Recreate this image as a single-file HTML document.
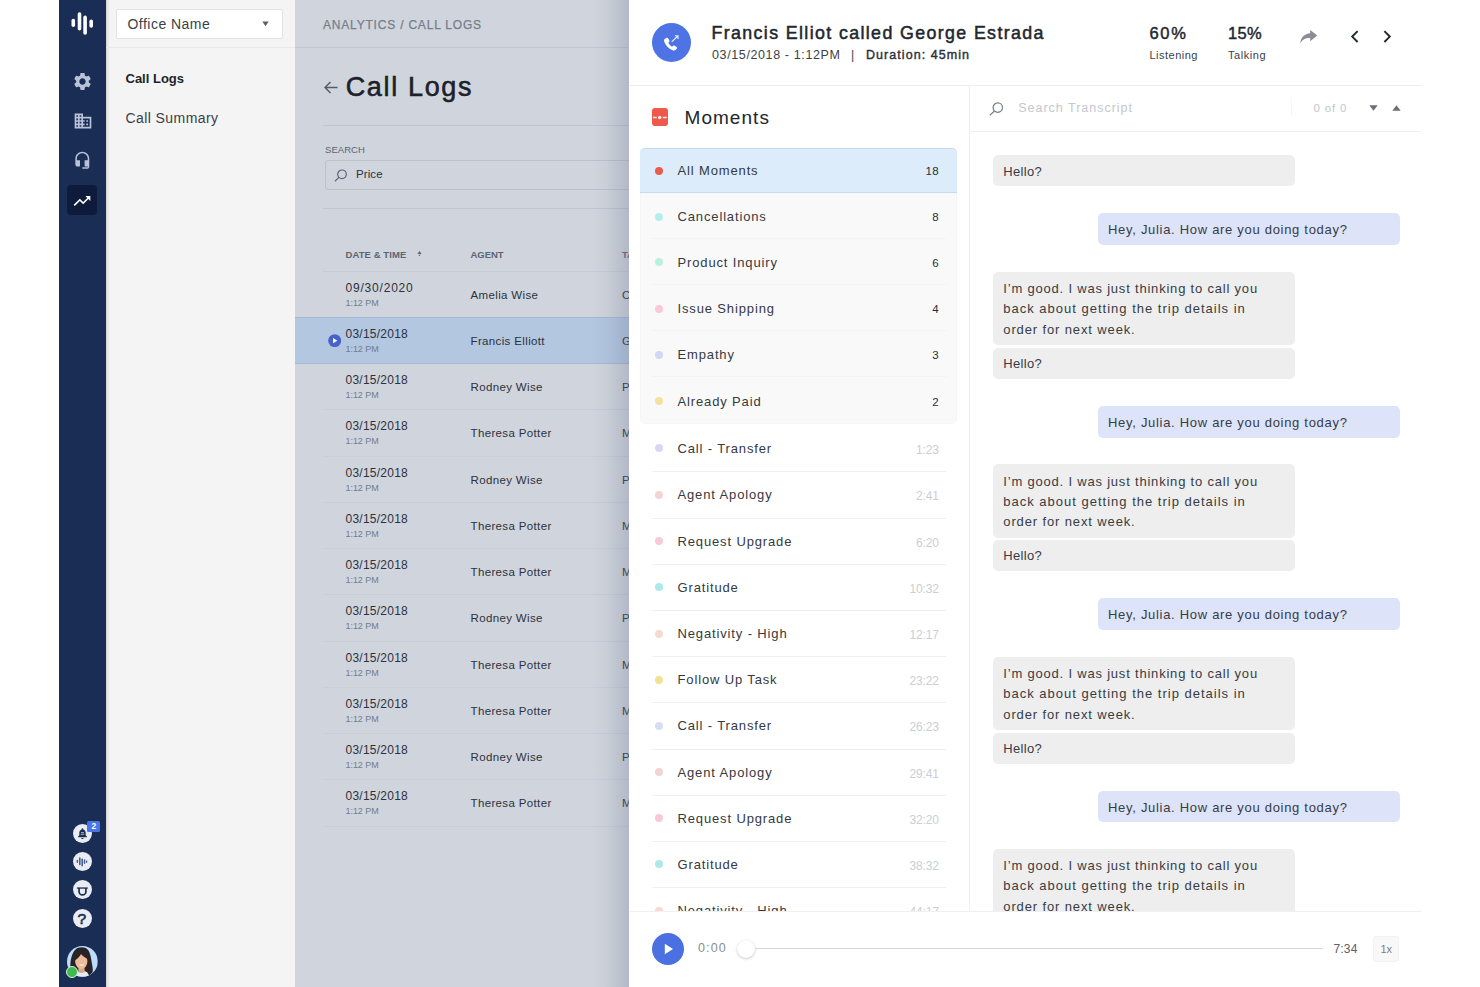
<!DOCTYPE html>
<html lang="en">
<head>
<meta charset="utf-8">
<title>Call Logs</title>
<style>
*{box-sizing:border-box;margin:0;padding:0}
html,body{width:1480px;height:987px;overflow:hidden;background:#fff}
body{font-family:"Liberation Sans",sans-serif;color:#1f232b;position:relative}
.abs{position:absolute}
.t{position:absolute;white-space:nowrap;line-height:1}
/* ---------- sidebar ---------- */
#side{left:59px;top:0;width:47px;height:987px;background:#1a2d54}
#side svg{position:absolute}
.cbtn{position:absolute;left:13.5px;width:19px;height:19px;border-radius:50%;background:#e9ecf3}
/* ---------- subnav ---------- */
#sub{left:106px;top:0;width:189px;height:987px;background:#f4f4f4;box-shadow:inset 3px 0 3px -2px rgba(0,0,0,.18)}
#office{left:10px;top:9px;width:167px;height:29.6px;background:#fff;border:1px solid #e3e3e3;border-radius:2px}
/* ---------- main (dimmed) ---------- */
#main{left:295px;top:0;width:334px;height:987px;background:#d0d5dd;overflow:hidden}
.hr{position:absolute;height:1px;background:#c0c5d0}
.row{position:absolute;left:0;width:334px;height:46.25px}
.row .d{left:50.5px;top:10.6px;font-size:12px;letter-spacing:.24px;color:#2c313c}
.row .h{left:50.5px;top:27.6px;font-size:9px;letter-spacing:-.05px;color:#747b89}
.row .a{left:175.5px;top:19.4px;font-size:11.5px;letter-spacing:.36px;color:#2c313c}
.row .x{left:327px;top:19.4px;font-size:11.5px;color:#2c313c}
.row.sel{background:#b3c7e1;box-shadow:inset 0 1px 0 #a4b8d4,inset 0 -1px 0 #a4b8d4}
.row .ln{position:absolute;left:28px;right:0;top:0;height:1px;background:#c8cdd7}
/* ---------- panel ---------- */
#panel{left:629px;top:0;width:792px;height:987px;background:#fff}
.dot{position:absolute;left:26.2px;width:8px;height:8px;border-radius:50%}
.ml{left:48.5px;font-size:13px;letter-spacing:.86px;color:#353941}
.mc{right:30.2px;font-size:11.5px;letter-spacing:.2px;color:#2a2e36}
.mt{right:30.2px;font-size:12px;letter-spacing:-.15px;color:#cbced3}
.sep{position:absolute;left:22.5px;width:294px;height:1px;background:#f0f0f0}
.sep.sg{background:#f3f3f3}
.bub{position:absolute;width:302px;border-radius:5px;font-size:13px;letter-spacing:.74px;color:#33373f}
.ct{font-size:13px;color:#383c44}
.bub.g{left:23.300px;background:#eeeeee}
.bub.b{left:128px;background:#dde3f8}
</style>
</head>
<body>

<!-- ================= SIDEBAR ================= -->
<div id="side" class="abs">
  <!-- logo -->
  <svg style="left:12px;top:12px" width="23" height="23" viewBox="0 0 23 23">
    <g fill="#fff">
      <rect x="0.5" y="6.8" width="3.6" height="8.2" rx="1.8"/>
      <rect x="6.7" y="0.2" width="3.6" height="18.4" rx="1.8"/>
      <rect x="12.3" y="3.6" width="3.6" height="19.2" rx="1.8"/>
      <rect x="18.4" y="7.4" width="3.6" height="8.4" rx="1.8"/>
    </g>
  </svg>

  <!-- gear -->
  <svg style="left:12.8px;top:70.8px" width="21" height="21" viewBox="0 0 24 24"><path fill="#b9c2d8" d="M19.14 12.94c.04-.3.06-.61.06-.94 0-.32-.02-.64-.07-.94l2.03-1.58c.18-.14.23-.41.12-.61l-1.92-3.32c-.12-.22-.37-.29-.59-.22l-2.39.96c-.5-.38-1.03-.7-1.62-.94l-.36-2.54c-.04-.24-.24-.41-.48-.41h-3.84c-.24 0-.43.17-.47.41l-.36 2.54c-.59.24-1.13.57-1.62.94l-2.39-.96c-.22-.08-.47 0-.59.22L2.74 8.87c-.12.21-.08.47.12.61l2.03 1.58c-.05.3-.09.63-.09.94s.02.64.07.94l-2.03 1.58c-.18.14-.23.41-.12.61l1.92 3.32c.12.22.37.29.59.22l2.39-.96c.5.38 1.03.7 1.62.94l.36 2.54c.05.24.24.41.48.41h3.84c.24 0 .44-.17.47-.41l.36-2.54c.59-.24 1.13-.56 1.62-.94l2.39.96c.22.08.47 0 .59-.22l1.92-3.32c.12-.22.07-.47-.12-.61l-2.01-1.58zM12 15.6c-1.98 0-3.6-1.62-3.6-3.6s1.62-3.6 3.6-3.6 3.6 1.62 3.6 3.6-1.62 3.6-3.6 3.6z"/></svg>
  <!-- building -->
  <svg style="left:13.5px;top:110.8px" width="20" height="20" viewBox="0 0 24 24"><path fill="#b9c2d8" d="M12 7V3H2v18h20V7H12zM6 19H4v-2h2v2zm0-4H4v-2h2v2zm0-4H4V9h2v2zm0-4H4V5h2v2zm4 12H8v-2h2v2zm0-4H8v-2h2v2zm0-4H8V9h2v2zm0-4H8V5h2v2zm10 12h-8v-2h2v-2h-2v-2h2v-2h-2V9h8v10zm-2-8h-2v2h2v-2zm0 4h-2v2h2v-2z"/></svg>
  <!-- headset -->
  <svg style="left:14px;top:151.2px" width="18.6" height="18.6" viewBox="0 0 24 24"><path fill="#b9c2d8" d="M12 1c-4.97 0-9 4.03-9 9v7c0 1.66 1.34 3 3 3h3v-8H5v-2c0-3.87 3.13-7 7-7s7 3.13 7 7v2h-4v8h4v1h-7v2h6c1.66 0 3-1.34 3-3V10c0-4.97-4.03-9-9-9z"/></svg>
  <!-- active analytics -->
  <div class="abs" style="left:8.3px;top:185.1px;width:29.6px;height:29.6px;border-radius:4px;background:#0e1b3a"></div>
  <svg style="left:12.9px;top:190.6px" width="20" height="20" viewBox="0 0 24 24"><path fill="#fff" d="M16 6l2.29 2.29-4.88 4.88-4-4L2 16.59 3.41 18l6-6 4 4 6.3-6.29L22 12V6z"/></svg>

  <!-- bottom round buttons -->
  <div class="cbtn" style="top:824px"></div>
  <svg style="left:17.5px;top:827.5px" width="11" height="12" viewBox="0 0 11 12"><path fill="#1a2d54" d="M5.5 0.3c.5 0 .8.4.8.8v.3c1.5.4 2.4 1.7 2.4 3.3v2.6l1.2 1.3v.6H1.100v-.6l1.200-1.300V4.700c0-1.600.9-2.900 2.400-3.300v-.3c0-.4.3-.8.8-.8zM4.300 9.900h2.400c0 .7-.5 1.200-1.200 1.200s-1.200-.5-1.200-1.200z"/><path d="M4 4.600h3M3.700 6.300h3.600" stroke="#e9ecf3" stroke-width=".7"/></svg>
  <div class="abs" style="left:28.4px;top:821.1px;width:12.7px;height:10.9px;background:#4a74e8;border-radius:1.5px"></div>
  <span class="t" style="left:32.6px;top:822.3px;font-size:8.5px;font-weight:700;color:#fff">2</span>

  <div class="cbtn" style="top:852px"></div>
  <svg style="left:17px;top:856px" width="12" height="11" viewBox="0 0 12 11"><g fill="#47608f"><rect x=".6" y="3.800" width="1.5" height="3.200" rx=".75"/><rect x="3" y="1.200" width="1.600" height="8" rx=".8"/><rect x="5.400" y="2.500" width="1.600" height="8" rx=".8"/><rect x="7.800" y="3.300" width="1.500" height="4.600" rx=".75"/><rect x="10" y="4.400" width="1.300" height="2.400" rx=".65"/></g></svg>

  <div class="cbtn" style="top:880.4px"></div>
  <svg style="left:17px;top:885.6px" width="13" height="11" viewBox="0 0 13 11"><path d="M.9 2.050H11.800" fill="none" stroke="#1a2d54" stroke-width="1.300"/><path d="M3.050 2V5.400a3.430 3.430 0 0 0 6.860 0V2" fill="none" stroke="#1a2d54" stroke-width="1.700"/></svg>

  <div class="cbtn" style="top:908.6px"></div>
  <span class="t" style="left:18.5px;top:910.6px;font-size:15.5px;color:#1a2d54;-webkit-text-stroke:.6px #1a2d54">?</span>

  <!-- avatar -->
  <svg style="left:7.900px;top:946px" width="30.800" height="30.800" viewBox="0 0 30.800 30.800">
    <defs><clipPath id="avc"><circle cx="15.400" cy="15.400" r="15.400"/></clipPath></defs>
    <g clip-path="url(#avc)">
      <rect width="30.800" height="30.800" fill="#bddcfb"/>
      <path d="M3.400 23C3 14.500 4.600 7.200 8.800 3.300 11 1.300 15.600.7 18.600 2.100c3.500 1.600 5 6.400 5.900 12.900.7 4.500 1.800 8 1.100 11.200L22 30H8z" fill="#2a2326"/>
      <path d="M8.300 31.500c.5-4.300 3-6.500 5.700-6.500h3c2.600 0 4.700 2.200 5.600 6.500z" fill="#e3ebf5"/>
      <path d="M11.500 20.500h5.800l.5 5.300c-1.900 1.600-4.700 1.600-6.600 0z" fill="#d9a688"/>
      <ellipse cx="14.300" cy="15.500" rx="6.100" ry="7.500" fill="#ebbc9b"/>
      <path d="M7.700 14.200C7.500 9 10.400 6.200 14.500 6.200c4 0 6.500 2.700 6.600 6.900-3-1.400-5.600-3.100-7.100-5.200-1.400 2.700-3.700 5-6.300 6.300z" fill="#2a2326"/>
      <path d="M12.300 17.900c1.500 1.100 3.500 1.100 5 0-.8 2-4.200 2-5 0z" fill="#fff"/>
    </g>
  </svg>
  <div class="abs" style="left:6.700px;top:966px;width:12px;height:12px;border-radius:50%;background:#3dbb52;border:1.300px solid #d6f0da"></div>
</div>

<!-- ================= SUBNAV ================= -->
<div id="sub" class="abs">
  <div class="hr" style="left:0;top:47px;width:189px;background:#e9e9e9"></div>
  <div id="office" class="abs">
    <span class="t" style="left:10.5px;top:7px;font-size:14px;letter-spacing:.47px;color:#3a3f48">Office Name</span>
    <svg class="abs" style="left:144.600px;top:11.200px" width="7" height="5.500" viewBox="0 0 7 5.500"><path d="M.3.400h6.400L3.500 5.200z" fill="#606060"/></svg>
  </div>
  <span class="t" style="left:19.5px;top:72px;font-size:13px;font-weight:700;color:#20242c">Call Logs</span>
  <span class="t" style="left:19.5px;top:111px;font-size:14px;letter-spacing:.42px;color:#3a3f48">Call Summary</span>
</div>

<!-- ================= MAIN (dimmed) ================= -->
<div id="main" class="abs">
  <span class="t" style="left:28px;top:18.5px;font-size:12px;letter-spacing:.8px;color:#767d8b;-webkit-text-stroke:.25px #767d8b">ANALYTICS / CALL LOGS</span>
  <div class="hr" style="left:0;top:47px;width:334px;background:#c2c7d2"></div>
  <svg class="abs" style="left:28.5px;top:80.5px" width="14" height="13" viewBox="0 0 14 13"><path d="M6.5 1L1 6.5 6.5 12M1.2 6.5H13.5" fill="none" stroke="#555b68" stroke-width="1.5"/></svg>
  <span class="t" style="left:50.7px;top:74.4px;font-size:27px;letter-spacing:1.66px;color:#1c2029;-webkit-text-stroke:.55px #1c2029">Call Logs</span>
  <div class="hr" style="left:28px;top:125px;width:306px"></div>
  <span class="t" style="left:30px;top:145px;font-size:9.5px;letter-spacing:.05px;color:#5d6472">SEARCH</span>
  <div class="abs" style="left:30px;top:160px;width:320px;height:29.5px;border:1px solid #bcc1cc;border-radius:3px"></div>
  <svg class="abs" style="left:39px;top:168.5px" width="14" height="13" viewBox="0 0 14 13"><circle cx="8" cy="5.3" r="4.3" fill="none" stroke="#5d6472" stroke-width="1.2"/><path d="M4.9 8.4L1 12.2" stroke="#5d6472" stroke-width="1.2" fill="none"/></svg>
  <span class="t" style="left:61px;top:168.8px;font-size:11.5px;letter-spacing:.1px;color:#2c313c">Price</span>
  <div class="hr" style="left:28px;top:208px;width:306px"></div>

  <span class="t" style="left:50.5px;top:250px;font-size:9.5px;font-weight:700;letter-spacing:.08px;color:#5d6472">DATE &amp; TIME</span>
  <svg class="abs" style="left:122px;top:251px" width="5" height="7" viewBox="0 0 5 7"><path d="M2.5 0L4.6 3H.4zM2.5 5.2L3.6 3.8H1.4z" fill="#5d6472"/></svg>
  <span class="t" style="left:175.5px;top:250px;font-size:9.5px;font-weight:700;letter-spacing:-.05px;color:#5d6472">AGENT</span>
  <span class="t" style="left:327px;top:250px;font-size:9.5px;font-weight:700;color:#5d6472">TA</span>
  <div class="hr" style="left:28px;top:271px;width:306px;background:#c6cbd6"></div>
  <div id="rows">
<div class="row" style="top:271px;height:46px"><span class="t d" style="letter-spacing:.8px">09/30/2020</span><span class="t h">1:12 PM</span><span class="t a">Amelia Wise</span><span class="t x">C</span></div>
<div class="row sel" style="top:317px;height:46.6px"><svg class="abs" style="left:32.6px;top:16.9px" width="13.4" height="13.4" viewBox="0 0 14 14"><circle cx="7" cy="7" r="6.8" fill="#4862c9"/><path d="M5.3 4.2L9.8 7 5.3 9.8z" fill="#fff"/></svg><span class="t d">03/15/2018</span><span class="t h">1:12 PM</span><span class="t a">Francis Elliott</span><span class="t x">G</span></div>
<div class="row" style="top:363px;height:46px"><span class="t d">03/15/2018</span><span class="t h">1:12 PM</span><span class="t a">Rodney Wise</span><span class="t x">P</span></div>
<div class="row" style="top:409px;height:47px"><span class="t d">03/15/2018</span><span class="t h">1:12 PM</span><span class="t a">Theresa Potter</span><span class="t x">M</span><i class="ln"></i></div>
<div class="row" style="top:456px;height:46px"><span class="t d">03/15/2018</span><span class="t h">1:12 PM</span><span class="t a">Rodney Wise</span><span class="t x">P</span><i class="ln"></i></div>
<div class="row" style="top:502px;height:46px"><span class="t d">03/15/2018</span><span class="t h">1:12 PM</span><span class="t a">Theresa Potter</span><span class="t x">M</span><i class="ln"></i></div>
<div class="row" style="top:548px;height:46px"><span class="t d">03/15/2018</span><span class="t h">1:12 PM</span><span class="t a">Theresa Potter</span><span class="t x">M</span><i class="ln"></i></div>
<div class="row" style="top:594px;height:47px"><span class="t d">03/15/2018</span><span class="t h">1:12 PM</span><span class="t a">Rodney Wise</span><span class="t x">P</span><i class="ln"></i></div>
<div class="row" style="top:641px;height:46px"><span class="t d">03/15/2018</span><span class="t h">1:12 PM</span><span class="t a">Theresa Potter</span><span class="t x">M</span><i class="ln"></i></div>
<div class="row" style="top:687px;height:46px"><span class="t d">03/15/2018</span><span class="t h">1:12 PM</span><span class="t a">Theresa Potter</span><span class="t x">M</span><i class="ln"></i></div>
<div class="row" style="top:733px;height:46px"><span class="t d">03/15/2018</span><span class="t h">1:12 PM</span><span class="t a">Rodney Wise</span><span class="t x">P</span><i class="ln"></i></div>
<div class="row" style="top:779px;height:47px"><span class="t d">03/15/2018</span><span class="t h">1:12 PM</span><span class="t a">Theresa Potter</span><span class="t x">M</span><i class="ln"></i></div>
<div class="hr" style="left:28px;top:826px;width:306px;background:#c8cdd7"></div>
</div><!--/rows-->
  <div id="shade" class="abs" style="left:296px;top:0;width:38px;height:987px;background:linear-gradient(90deg,rgba(110,118,145,0) 0%,rgba(110,118,145,.07) 40%,rgba(110,118,145,.30) 100%)"></div>
</div>

<!-- ================= PANEL ================= -->
<div id="panel" class="abs">
<svg class="abs" style="left:23px;top:22.800px" width="39" height="39" viewBox="0 0 39 39"><circle cx="19.500" cy="19.500" r="19.500" fill="#4d73e5"/><g transform="translate(-.78,.75) scale(1.045)"><path fill="#fff" d="M14.300 13.800c.5-.5 1.300-.5 1.700.1l1.300 1.900c.3.500.3 1.100-.1 1.500l-.8.900c.8 1.600 2 2.900 3.600 3.700l.9-.8c.4-.4 1-.4 1.500-.1l1.900 1.300c.6.400.6 1.200.1 1.700l-.9.900c-.7.700-1.700.9-2.600.6-4-1.400-7.100-4.500-8.500-8.500-.3-.9-.1-1.900.6-2.600z"/></g><path d="M19.700 18.800l6.100-5.800M22.800 12.800h3.200v3.200" fill="none" stroke="#eaf0fd" stroke-width="1.100"/></svg>
<span class="t" style="left:82.5px;top:24.6px;font-size:17.800px;letter-spacing:1.38px;color:#22262e;-webkit-text-stroke:.5px #22262e">Francis Elliot called George Estrada</span>
<span class="t" style="left:83px;top:49.4px;font-size:12.500px;letter-spacing:.62px;color:#3a3f48">03/15/2018 - 1:12PM</span>
<span class="t" style="left:222px;top:49px;font-size:12.500px;color:#3a3f48">|</span>
<span class="t" style="left:237px;top:49.4px;font-size:12.500px;letter-spacing:1.05px;color:#2c313a;-webkit-text-stroke:.4px #2c313a">Duration: 45min</span>
<span class="t" style="left:520.4px;top:24.8px;font-size:16.500px;letter-spacing:1.7px;color:#22262e;-webkit-text-stroke:.45px #22262e">60%</span>
<span class="t" style="left:520.4px;top:50.3px;font-size:11px;letter-spacing:.5px;color:#3a3f48">Listening</span>
<span class="t" style="left:599px;top:24.8px;font-size:16.500px;letter-spacing:.3px;color:#22262e;-webkit-text-stroke:.45px #22262e">15%</span>
<span class="t" style="left:599px;top:50.3px;font-size:11px;letter-spacing:.55px;color:#3a3f48">Talking</span>
<svg class="abs" style="left:670.5px;top:29.500px" width="17.500" height="14" viewBox="0 0 17.500 14"><path fill="#8a8d93" d="M10.200 0l7.100 5.600-7.100 5.700V8c-4.300-.3-7.500 1-9.900 5.200C.8 7.700 4.300 3.800 10.200 3.300z"/></svg>
<svg class="abs" style="left:721px;top:30.4px" width="10" height="14" viewBox="0 0 10 14"><path d="M7.600 1.200L2.200 6.600l5.400 5.400" fill="none" stroke="#22262e" stroke-width="1.900"/></svg>
<svg class="abs" style="left:752.7px;top:30.4px" width="10" height="14" viewBox="0 0 10 14"><path d="M2.400 1.200L7.800 6.600l-5.400 5.400" fill="none" stroke="#22262e" stroke-width="1.900"/></svg>
<div class="hr" style="left:0;top:85px;width:792px;background:#eeeeee"></div>
<div class="abs" style="left:22.6px;top:108.400px;width:16.900px;height:17.300px;border-radius:3px;background:#ee594c"></div>
<svg class="abs" style="left:24.2px;top:114.500px" width="14" height="5" viewBox="0 0 14 5"><path d="M0 2.500h3.700M9.800 2.500h3.900" stroke="#fff3e4" stroke-width="1.400"/><circle cx="6.700" cy="2.500" r="1.700" fill="#fff3e4"/></svg>
<span class="t" style="left:55.5px;top:107.500px;font-size:19px;letter-spacing:1.050px;color:#22262e">Moments</span>
<div class="abs" style="left:340px;top:86px;width:1px;height:825px;background:#f0f0f0"></div>
<div class="abs" style="left:0;top:86px;width:340px;height:825px;overflow:hidden">
<div class="abs" style="left:11.3px;top:62.3px;width:316.800px;height:276.200px;background:#f9f9f9;border:1px solid #f5f5f5;border-radius:6px"></div>
<div class="abs" style="left:11.3px;top:62.3px;width:316.800px;height:44.600px;background:#dcecfb;border-top:1px solid #c6dbef;border-bottom:1px solid #c6d9ee;border-radius:5px 5px 0 0"></div>
<i class="dot" style="top:80.7px;background:#e85c4d"></i>
<span class="t ml" style="top:78px">All Moments</span>
<span class="t mc" style="top:80.25px">18</span>
<i class="dot" style="top:126.6px;background:#b9ecec"></i>
<span class="t ml" style="top:124px">Cancellations</span>
<span class="t mc" style="top:126.25px">8</span>
<i class="sep sg" style="top:152px"></i>
<i class="dot" style="top:172.2px;background:#baf0de"></i>
<span class="t ml" style="top:170px">Product Inquiry</span>
<span class="t mc" style="top:172.25px">6</span>
<i class="sep sg" style="top:198px"></i>
<i class="dot" style="top:218.7px;background:#f9c9d6"></i>
<span class="t ml" style="top:216px">Issue Shipping</span>
<span class="t mc" style="top:218.25px">4</span>
<i class="sep sg" style="top:244px"></i>
<i class="dot" style="top:264.7px;background:#d3d6f4"></i>
<span class="t ml" style="top:262px">Empathy</span>
<span class="t mc" style="top:264.25px">3</span>
<i class="sep sg" style="top:290px"></i>
<i class="dot" style="top:311.2px;background:#f6dfa2"></i>
<span class="t ml" style="top:309px">Already Paid</span>
<span class="t mc" style="top:311.25px">2</span>
<i class="dot" style="top:358.3px;background:#d6d9f5"></i>
<span class="t ml" style="top:356px">Call - Transfer</span>
<span class="t mt" style="top:358px">1:23</span>
<i class="sep" style="top:385px"></i>
<i class="dot" style="top:404.7px;background:#f4d3d3"></i>
<span class="t ml" style="top:402px">Agent Apology</span>
<span class="t mt" style="top:404px">2:41</span>
<i class="sep" style="top:432px"></i>
<i class="dot" style="top:451.0px;background:#fac9d6"></i>
<span class="t ml" style="top:449px">Request Upgrade</span>
<span class="t mt" style="top:451px">6:20</span>
<i class="sep" style="top:478px"></i>
<i class="dot" style="top:497.2px;background:#aee9e9"></i>
<span class="t ml" style="top:495px">Gratitude</span>
<span class="t mt" style="top:497px">10:32</span>
<i class="sep" style="top:524px"></i>
<i class="dot" style="top:543.7px;background:#f5d9d3"></i>
<span class="t ml" style="top:541px">Negativity - High</span>
<span class="t mt" style="top:543px">12:17</span>
<i class="sep" style="top:570px"></i>
<i class="dot" style="top:589.6px;background:#f1e193"></i>
<span class="t ml" style="top:587px">Follow Up Task</span>
<span class="t mt" style="top:589px">23:22</span>
<i class="sep" style="top:616px"></i>
<i class="dot" style="top:635.9px;background:#d9dcf5"></i>
<span class="t ml" style="top:633px">Call - Transfer</span>
<span class="t mt" style="top:635px">26:23</span>
<i class="sep" style="top:663px"></i>
<i class="dot" style="top:682.1px;background:#f4d3d3"></i>
<span class="t ml" style="top:680px">Agent Apology</span>
<span class="t mt" style="top:682px">29:41</span>
<i class="sep" style="top:709px"></i>
<i class="dot" style="top:728.4px;background:#fac9d6"></i>
<span class="t ml" style="top:726px">Request Upgrade</span>
<span class="t mt" style="top:728px">32:20</span>
<i class="sep" style="top:755px"></i>
<i class="dot" style="top:774.4px;background:#aee9e9"></i>
<span class="t ml" style="top:772px">Gratitude</span>
<span class="t mt" style="top:774px">38:32</span>
<i class="sep" style="top:801px"></i>
<i class="dot" style="top:820.6px;background:#f5d9d3"></i>
<span class="t ml" style="top:818px">Negativity - High</span>
<span class="t mt" style="top:820px">44:17</span>
<i class="sep" style="top:848px"></i>
</div>
<svg class="abs" style="left:359.5px;top:101.500px" width="15" height="14" viewBox="0 0 15 14"><circle cx="8.800" cy="5.600" r="4.700" fill="none" stroke="#777b83" stroke-width="1.200"/><path d="M5.400 9L.8 13.400" stroke="#777b83" stroke-width="1.200" fill="none"/></svg>
<span class="t" style="left:389.3px;top:102.2px;font-size:12.500px;letter-spacing:.98px;color:#c3c7ce">Search Transcript</span>
<div class="abs" style="left:661.5px;top:99px;width:1px;height:17px;background:#f6f6f6"></div>
<span class="t" style="left:684.4px;top:103px;font-size:11.500px;letter-spacing:.85px;color:#c3c7ce">0 of 0</span>
<svg class="abs" style="left:740.3px;top:105px" width="9" height="6" viewBox="0 0 9 6"><path d="M.3.3h8.400L4.500 5.800z" fill="#6b6f77"/></svg>
<svg class="abs" style="left:763px;top:105px" width="9" height="6" viewBox="0 0 9 6"><path d="M.3 5.700h8.400L4.500.2z" fill="#6b6f77"/></svg>
<div class="hr" style="left:341px;top:131px;width:451px;background:#efefef"></div>
<div class="abs" style="left:341px;top:132px;width:451px;height:779px;overflow:hidden">
<div class="bub g" style="top:22.9px;height:31.400px"></div>
<span class="t ct" style="left:33.3px;top:33px;letter-spacing:0.34px">Hello?</span>
<div class="bub b" style="top:81.3px;height:31.800px"></div>
<span class="t ct" style="left:138px;top:91px;letter-spacing:0.7px">Hey, Julia. How are you doing today?</span>
<div class="bub g" style="top:139.8px;height:73.300px"></div>
<span class="t ct" style="left:33.3px;top:150px;letter-spacing:0.8px">I’m good. I was just thinking to call you</span>
<span class="t ct" style="left:33.3px;top:170px;letter-spacing:1px">back about getting the trip details in</span>
<span class="t ct" style="left:33.3px;top:191px;letter-spacing:0.87px">order for next week.</span>
<div class="bub g" style="top:215.6px;height:31.400px"></div>
<span class="t ct" style="left:33.3px;top:225px;letter-spacing:0.34px">Hello?</span>
<div class="bub b" style="top:273.75px;height:31.800px"></div>
<span class="t ct" style="left:138px;top:284px;letter-spacing:0.7px">Hey, Julia. How are you doing today?</span>
<div class="bub g" style="top:332.25px;height:73.300px"></div>
<span class="t ct" style="left:33.3px;top:343px;letter-spacing:0.8px">I’m good. I was just thinking to call you</span>
<span class="t ct" style="left:33.3px;top:363px;letter-spacing:1px">back about getting the trip details in</span>
<span class="t ct" style="left:33.3px;top:383px;letter-spacing:0.87px">order for next week.</span>
<div class="bub g" style="top:408.05px;height:31.400px"></div>
<span class="t ct" style="left:33.3px;top:417px;letter-spacing:0.34px">Hello?</span>
<div class="bub b" style="top:466.2px;height:31.800px"></div>
<span class="t ct" style="left:138px;top:476px;letter-spacing:0.7px">Hey, Julia. How are you doing today?</span>
<div class="bub g" style="top:524.7px;height:73.300px"></div>
<span class="t ct" style="left:33.3px;top:535px;letter-spacing:0.8px">I’m good. I was just thinking to call you</span>
<span class="t ct" style="left:33.3px;top:555px;letter-spacing:1px">back about getting the trip details in</span>
<span class="t ct" style="left:33.3px;top:576px;letter-spacing:0.87px">order for next week.</span>
<div class="bub g" style="top:600.5px;height:31.400px"></div>
<span class="t ct" style="left:33.3px;top:610px;letter-spacing:0.34px">Hello?</span>
<div class="bub b" style="top:658.65px;height:31.800px"></div>
<span class="t ct" style="left:138px;top:669px;letter-spacing:0.7px">Hey, Julia. How are you doing today?</span>
<div class="bub g" style="top:717.15px;height:73.300px"></div>
<span class="t ct" style="left:33.3px;top:727px;letter-spacing:0.8px">I’m good. I was just thinking to call you</span>
<span class="t ct" style="left:33.3px;top:747px;letter-spacing:1px">back about getting the trip details in</span>
<span class="t ct" style="left:33.3px;top:768px;letter-spacing:0.87px">order for next week.</span>
</div>
<div class="hr" style="left:0;top:911px;width:792px;background:#f0f0f0"></div>
<div class="abs" style="left:0;top:912px;width:792px;height:75px;background:#fff"></div>
<svg class="abs" style="left:22.6px;top:933px" width="32" height="32" viewBox="0 0 32 32"><circle cx="16" cy="16" r="16" fill="#4a70e2"/><path d="M12.800 10.800L21 16 12.800 21.200z" fill="#fff"/></svg>
<span class="t" style="left:69px;top:942.300px;font-size:12.500px;letter-spacing:1.150px;color:#8a8d93">0:00</span>
<div class="abs" style="left:117px;top:947.600px;width:576.5px;height:1.500px;background:#d8d8d8"></div>
<div class="abs" style="left:107.6px;top:940px;width:18px;height:18px;border-radius:50%;background:#fff;box-shadow:0 1px 3px rgba(0,0,0,.2),0 0 1px rgba(0,0,0,.08)"></div>
<span class="t" style="left:704.4px;top:942.500px;font-size:12px;letter-spacing:.2px;color:#5c6068">7:34</span>
<div class="abs" style="left:744px;top:936.400px;width:26px;height:26px;border-radius:3px;background:#f8f8f8;border:1px solid #f2f2f2"></div>
<span class="t" style="left:751.5px;top:944px;font-size:11px;color:#7a7e86">1x</span>
</div><!--/panel-->

</body>
</html>
